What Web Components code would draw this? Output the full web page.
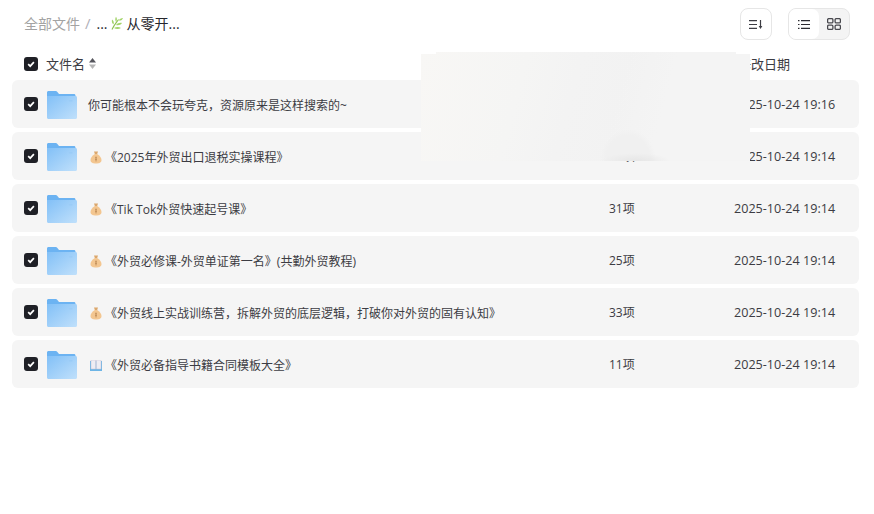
<!DOCTYPE html>
<html lang="zh">
<head>
<meta charset="utf-8">
<title>全部文件</title>
<style>
  html, body { margin: 0; height: 100%; background: #fff; }
  body { font-family: "Open Sans", "Noto Sans CJK SC", sans-serif; color: #3c3c43; overflow: hidden; }
</style>
</head>
<body>
<file-page>
  <file-toolbar slot="toolbar"></file-toolbar>
  <file-head slot="head"></file-head>
  <file-row date="2025-10-24 19:16">你可能根本不会玩夸克，资源原来是这样搜索的~</file-row>
  <file-row icon="bag" count="11项" date="2025-10-24 19:14">《2025年外贸出口退税实操课程》</file-row>
  <file-row icon="bag" count="31项" date="2025-10-24 19:14">《Tik Tok外贸快速起号课》</file-row>
  <file-row icon="bag" count="25项" date="2025-10-24 19:14">《外贸必修课-外贸单证第一名》(共勤外贸教程)</file-row>
  <file-row icon="bag" count="33项" date="2025-10-24 19:14">《外贸线上实战训练营，拆解外贸的底层逻辑，打破你对外贸的固有认知》</file-row>
  <file-row icon="book" count="11项" date="2025-10-24 19:14">《外贸必备指导书籍合同模板大全》</file-row>
</file-page>

<script>
const ICONS = {
  bag: `<svg width="12" height="13" viewBox="0 0 12 13">
      <path d="M4 .5h4L7.200 3H4.800z" fill="#dba76d"/>
      <path d="M4.800 3h2.400C9.600 4.500 11.500 6.800 11.500 9c0 2.800-2.500 3.500-5.500 3.500S.5 11.800.5 9C.5 6.800 2.400 4.500 4.800 3z" fill="#f3c690"/>
      <path d="M6 5.500v5M5 6.800h2M5 8.600h2" stroke="#bd8a55" stroke-width=".8" fill="none"/>
    </svg>`,
  book: `<svg width="12" height="11" viewBox="0 0 12 11">
      <path d="M0 1h12v10H0z" fill="#6db5e6"/>
      <path d="M1 0h4.700v9H1zM6.300 0H11v9H6.300z" fill="#efedf3" stroke="#c6c3d2" stroke-width=".5"/>
    </svg>`
}

customElements.define('file-check', class FileCheck extends HTMLElement {
  constructor() {
    super()
    this.attachShadow({ mode: "open" })
    this.shadowRoot.innerHTML = `
      <style>
        :host { display: block; width: 14px; height: 14px; border-radius: 3px; background: #1f2026; }
        svg { display: block; }
      </style>
      <svg width="14" height="14" viewBox="0 0 14 14">
        <path d="M4.200 7.200l2 2 3.700-4" fill="none" stroke="#fff" stroke-width="1.700"/>
      </svg>`
  }
})

customElements.define('folder-icon', class FolderIcon extends HTMLElement {
  constructor() {
    super()
    this.attachShadow({ mode: "open" })
    this.shadowRoot.innerHTML = `
      <style>
        :host { display: block; width: 30px; height: 28px; }
        svg { display: block; }
      </style>
      <svg width="30" height="28" viewBox="0 0 30 28">
        <defs>
          <linearGradient id="front" x1="0" y1="0" x2="1" y2="1">
            <stop offset="0" stop-color="#82c0f7"/>
            <stop offset="1" stop-color="#c0e0fb"/>
          </linearGradient>
        </defs>
        <path d="M0 1.500C0 .6.600 0 1.500 0h7.200c.7 0 1.300.3 1.700.9L12 3h15c.9 0 1.500.6 1.500 1.500V8H0z" fill="#6cb3f2"/>
        <path d="M0 5h28.500c.9 0 1.500.6 1.500 1.500v20c0 .9-.6 1.500-1.500 1.500H1.500C.6 28 0 27.400 0 26.500z" fill="url(#front)"/>
        <rect x="22" y="9" width="3.500" height="1.500" rx=".5" fill="#9accf7"/>
      </svg>`
  }
})

customElements.define('file-toolbar', class FileToolbar extends HTMLElement {
  constructor() {
    super()
    this.attachShadow({ mode: "open" })
    this.shadowRoot.innerHTML = `
      <style>
        :host { display: flex; align-items: center; height: 32px; padding: 8px 24px 0; }
        .trail { display: flex; align-items: center; margin-top: -2px; }
        .crumb { font-size: 14px; color: #a3a3a3; }
        .sep { font-size: 15px; color: #b0b0b8; margin: 0 6px 0 5px; }
        .cur { font-size: 14px; color: #26262c; display: flex; align-items: center; gap: 3px; }
        .spacer { flex: 1; }
        .btn { box-sizing: border-box; width: 32px; height: 32px; border: 1px solid #e6e6e6; border-radius: 8px; display: flex; align-items: center; justify-content: center; margin-right: 16px; }
        .group { box-sizing: border-box; width: 62px; height: 32px; border: 1px solid #e6e6e6; border-radius: 8px; background: #f4f4f4; display: flex; }
        .group span { width: 30px; display: flex; align-items: center; justify-content: center; }
        .group .on { background: #fff; border-radius: 7px; }
        svg { display: block; }
      </style>
      <span class="trail">
        <span class="crumb">全部文件</span><span class="sep">/</span>
        <span class="cur">...
          <svg width="13" height="14" viewBox="0 0 13 14">
            <path d="M1 13.500C2.500 10 5 7 7.500 3.500" stroke="#8cc04f" stroke-width="1.100" fill="none"/>
            <path d="M2.500 8.500C1 7.500.5 5.500 1 3.500c1.700 1 2.300 3 1.500 5zM5 6C4 4.500 4 2.500 5 .8c1.200 1.500 1.200 3.500 0 5.200zM5 9c1.500-1.700 3.500-2.500 6-2-1.300 1.800-3.500 2.800-6 2zM7.500 4.500C8.500 3 10 2 12 2c-.5 1.800-2.300 3-4.500 2.500zM3 12c2-1.200 5-1.300 7 0-2 1.200-5 1.300-7 0z" fill="#a3d46a"/>
          </svg>
          从零开...</span>
      </span>
      <span class="spacer"></span>
      <span class="btn">
        <svg width="14" height="9" viewBox="0 0 14 9">
          <path d="M0 .6h8M0 4.500h8M0 8.400h8" stroke="#3c3c43" stroke-width="1.200"/>
          <path d="M11.500 0v7" stroke="#3c3c43" stroke-width="1.200"/>
          <path d="M9.700 6h3.600l-1.800 3z" fill="#3c3c43"/>
        </svg>
      </span>
      <span class="group">
        <span class="on">
          <svg width="12" height="9" viewBox="0 0 12 9">
            <path d="M3 .6h9M3 4.500h9M3 8.400h9" stroke="#2c2c32" stroke-width="1.100"/>
            <path d="M0 .6h1.500M0 4.500h1.500M0 8.400h1.500" stroke="#2c2c32" stroke-width="1.100"/>
          </svg>
        </span>
        <span>
          <svg width="14" height="12" viewBox="0 0 14 12">
            <rect x=".6" y=".6" width="5.300" height="4.300" rx="1.200" fill="none" stroke="#48484e" stroke-width="1.300"/>
            <rect x="8.100" y=".6" width="5.300" height="4.300" rx="1.200" fill="none" stroke="#48484e" stroke-width="1.300"/>
            <rect x=".6" y="7.100" width="5.300" height="4.300" rx="1.200" fill="none" stroke="#48484e" stroke-width="1.300"/>
            <rect x="8.100" y="7.100" width="5.300" height="4.300" rx="1.200" fill="none" stroke="#48484e" stroke-width="1.300"/>
          </svg>
        </span>
      </span>`
  }
})

customElements.define('file-head', class FileHead extends HTMLElement {
  constructor() {
    super()
    this.attachShadow({ mode: "open" })
    this.shadowRoot.innerHTML = `
      <style>
        :host { display: grid; grid-template-columns: 14px 1fr 84px; align-items: center; column-gap: 8px; box-sizing: border-box; height: 40px; padding: 8px 52px 0 24px; font-size: 13px; color: #3c3c43; }
        .name { display: flex; align-items: center; gap: 4px; margin-bottom: 2px; }
        .date { margin-bottom: 2px; }
      </style>
      <file-check></file-check>
      <span class="name">文件名
        <svg width="7" height="11" viewBox="0 0 7 11"><path d="M3.500 0L7 4.600H0z" fill="#55555c"/><path d="M0 6.400h7L3.500 11z" fill="#b5b5b5"/></svg>
      </span>
      <span class="date">修改日期</span>`
  }
})

customElements.define('file-row', class FileRow extends HTMLElement {
  constructor() {
    super()
    this.attachShadow({ mode: "open" })
    const icon = ICONS[this.getAttribute('icon')] || ""
    const count = this.getAttribute('count') || ""
    const date = this.getAttribute('date') || ""
    this.shadowRoot.innerHTML = `
      <style>
        :host { display: grid; grid-template-columns: 14px 30px 541px 125px 1fr; align-items: center; height: 48px; margin: 0 15px 4px 12px; padding-left: 12px; background: #f5f5f5; border-radius: 6px; font-size: 12px; color: #3c3c43; }
        folder-icon { margin: 2px 0 0 9px; }
        .name { display: flex; align-items: center; gap: 3px; margin: 2px 0 0 20px; white-space: nowrap; }
        .icon { display: flex; justify-content: flex-end; width: 14px; }
        .icon:empty { display: none; }
        .num { font-size: 12px; }
        .date { font-size: 12.600px; }
      </style>
      <file-check></file-check>
      <folder-icon></folder-icon>
      <span class="name"><span class="icon">${icon}</span><slot></slot></span>
      <span class="num">${count}</span>
      <span class="date">${date}</span>`
  }
})

customElements.define('file-page', class FilePage extends HTMLElement {
  constructor() {
    super()
    this.attachShadow({ mode: "open" })
    this.shadowRoot.innerHTML = `
      <style>
        :host { display: block; position: relative; }
        .veil { position: absolute; left: 421px; top: 52px; width: 329px; height: 109px;
          background:
            radial-gradient(ellipse 28px 32px at 207px 109px, #f0f0f0 0 80%, transparent),
            linear-gradient(105deg, transparent 58%, #f4f4f4 72%),
            linear-gradient(105deg, #f8f7f5 0%, #f5f5f4 30%, #f3f3f3 45%, #f2f2f2 62%);
          clip-path: polygon(15px 0, 315px 0, 315px 2px, 329px 2px, 329px 100%, 0 100%, 0 2px, 15px 2px); }
        .spot { position: absolute; left: 180px; bottom: 0; width: 70px; height: 8px; background: radial-gradient(ellipse at bottom, #e6e6e6, transparent 70%); }
      </style>
      <slot name="toolbar"></slot>
      <slot name="head"></slot>
      <slot></slot>
      <div class="veil"><div class="spot"></div></div>`
  }
})
</script>
</body>
</html>
